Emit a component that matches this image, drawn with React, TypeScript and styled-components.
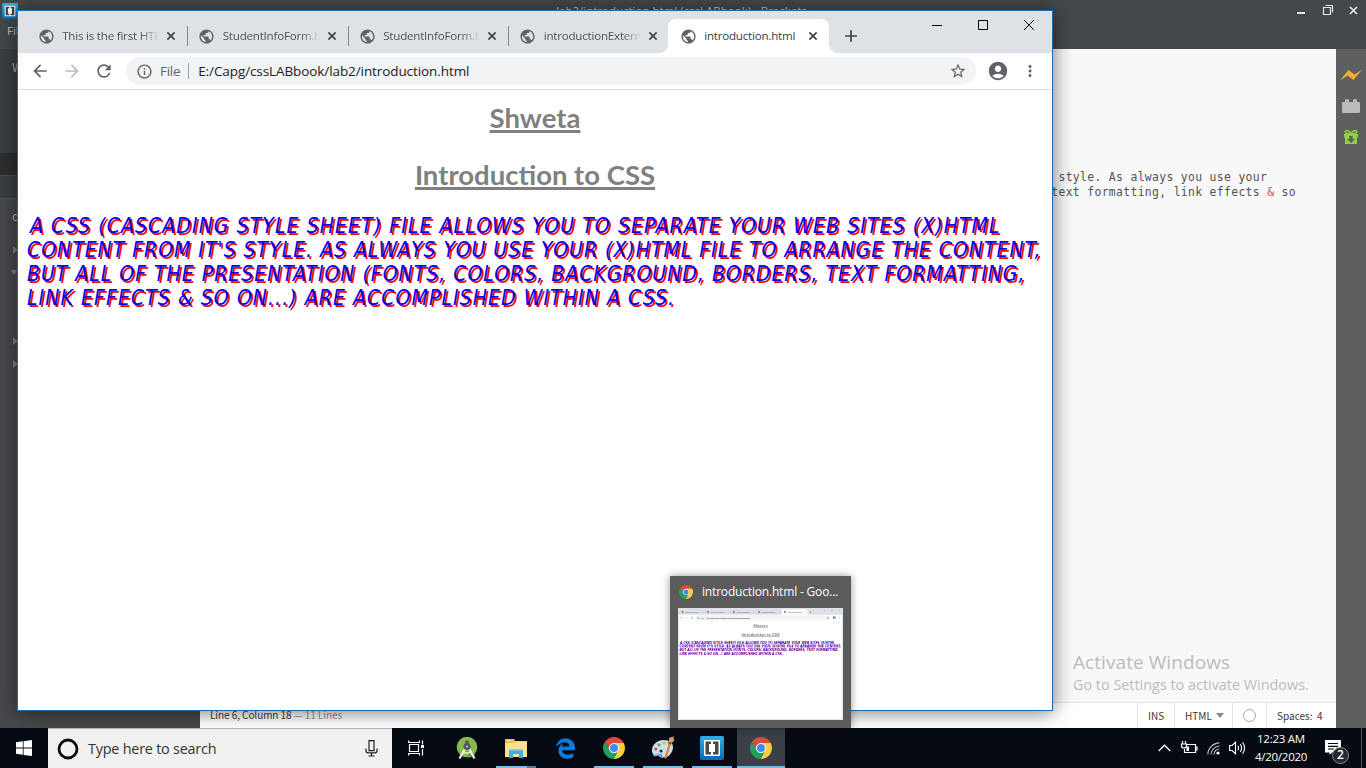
import React from "react";
import styled, { createGlobalStyle, css } from "styled-components";
import {
  MdAccountCircle,
  MdAdd,
  MdArrowBack,
  MdArrowForward,
  MdInfoOutline,
  MdMoreVert,
  MdPublic,
  MdRefresh,
  MdStarBorder,
} from "react-icons/md";
import { FaEdgeLegacy } from "react-icons/fa";

const GlobalStyle = createGlobalStyle`
  *, *::before, *::after { box-sizing: border-box; }
  body { margin: 0; overflow: hidden; background: #060a12; }
  svg { display: block; flex: none; }
`;

const uiFont = `"Open Sans", "Noto Sans", sans-serif`;
const editorUiFont = `"Noto Sans CJK SC", "Noto Sans", sans-serif`;

const Desktop = styled.div`
  position: relative;
  display: grid;
  grid-template-rows: 728px 40px;
  width: 1366px;
  height: 768px;
  overflow: hidden;
  font-family: ${uiFont};
  white-space: nowrap;
`;

/* ---------- Code editor ---------- */

const EditorApp = styled.div`
  display: grid;
  grid-template-rows: 22px 27px 1fr;
  min-height: 0;
  background: #45484a;
`;

const EditorTitleBar = styled.header`
  display: grid;
  grid-template-columns: 1fr auto 1fr;
  align-items: center;
  padding: 0 7px 0 2px;
  color: #c8caca;
`;

const EditorTitle = styled.span`
  padding-left: 2px;
  font-size: 11.5px;
  line-height: 20px;
`;

const EditorWindowButtons = styled.div`
  display: flex;
  justify-content: flex-end;
`;

const EditorMenu = styled.nav`
  padding: 0 7px;
  font-size: 11.5px;
  line-height: 17px;
  color: #c3c5c5;
`;

const EditorBody = styled.div`
  display: grid;
  grid-template-columns: 200px 1fr 30px;
  min-height: 0;
`;

const Sidebar = styled.aside`
  display: flex;
  flex-direction: column;
  background: #47484b;
  color: #b5b8b8;
  font: 12px/20px ${editorUiFont};
`;

const WorkingFiles = styled.div`
  height: 104px;
  padding: 8px 12px;
  background: #3c3f41;
`;

const SelectedFile = styled.div`
  height: 22px;
  background: #2d2e30;
`;

const OtherFile = styled.div`
  height: 24px;
  background: #3c3f41;
  border-top: 1px solid #4b4d4f;
  border-bottom: 1px solid #55575a;
`;

const ProjectName = styled.div`
  height: 39px;
  padding: 7px 12px 0;
`;

const TreeRow = styled.div<{ $open?: boolean; $gap?: number }>`
  display: flex;
  align-items: center;
  height: 23px;
  margin-bottom: ${(p) => p.$gap ?? 0}px;
  padding-left: ${(p) => (p.$open ? 11 : 13)}px;
`;

const CodePane = styled.main`
  display: flex;
  flex-direction: column;
  background: #f8f8f8;
`;

const CodeText = styled.pre`
  flex: 1;
  margin: 0;
  padding: 121px 40px 0 0;
  text-align: right;
  font: 11.4px/15px "DejaVu Sans Mono", "Liberation Mono", monospace;
  letter-spacing: 0.34px;
  color: #535353;
`;

const CodeLine = styled.div<{ $inset?: number }>`
  padding-right: ${(p) => p.$inset ?? 0}px;
`;

const EntityError = styled.span`
  color: #e6413f;
`;

const Watermark = styled.div`
  align-self: flex-end;
  width: 263px;
  height: 52px;
  color: #bcbcbc;
`;

const WatermarkTitle = styled.div`
  font-size: 19px;
  line-height: 24px;
  letter-spacing: 0.07px;
`;

const WatermarkText = styled.div`
  font-size: 14.4px;
  line-height: 22px;
`;

const StatusBar = styled.footer`
  display: flex;
  height: 26px;
  border-top: 1px solid #e2e2e2;
  background: #fff;
  color: #3b3b3b;
  font: 10px/24px ${editorUiFont};
`;

const CursorInfo = styled.div`
  flex: 1;
  padding-left: 10px;
  letter-spacing: -0.07px;
`;

const LineCount = styled.span`
  color: #949494;
`;

const StatusCell = styled.div<{ $width: number }>`
  display: flex;
  align-items: center;
  justify-content: space-between;
  width: ${(p) => p.$width}px;
  padding: 0 8px 0 10px;
  border-left: 1px solid #e2e2e2;
  white-space: pre;
`;

const LintDot = styled.span`
  width: 13px;
  height: 13px;
  border: 1px solid #a6a6a6;
  border-radius: 50%;
`;

const ExtensionBar = styled.aside`
  display: flex;
  flex-direction: column;
  align-items: center;
  gap: 9px;
  padding-top: 15px;
  background: #5d5f60;
`;

/* ---------- Browser ---------- */

const BrowserPlace = styled.div`
  position: absolute;
  left: 17px;
  top: 10px;
  box-shadow: 0 1px 18px rgba(0, 0, 0, 0.55);
`;

const BrowserFrame = styled.div`
  display: grid;
  grid-template-rows: 42px 37px 1fr;
  width: 1036px;
  height: 701px;
  border: 1px solid #186fb6;
  background: #fff;
`;

const TabStrip = styled.div`
  display: flex;
  align-items: flex-end;
  padding-left: 8px;
  background: #dee1e6;
`;

const activeTab = css`
  background: #fff;
  border-radius: 8px 8px 0 0;
  &::before,
  &::after {
    content: "";
    position: absolute;
    bottom: 0;
    width: 8px;
    height: 8px;
  }
  &::before {
    left: -8px;
    background: radial-gradient(circle at 0 0, transparent 7.5px, #fff 8px);
  }
  &::after {
    right: -8px;
    background: radial-gradient(circle at 100% 0, transparent 7.5px, #fff 8px);
  }
`;

const Tab = styled.div<{ $active?: boolean; $divided?: boolean }>`
  position: relative;
  display: flex;
  align-items: center;
  width: 160.5px;
  height: 34px;
  padding: 0 11.2px 0 11.5px;
  color: ${(p) => (p.$active ? "#3c4043" : "#505357")};
  ${(p) => p.$active && activeTab}
  ${(p) =>
    p.$divided &&
    "background: linear-gradient(#84878c, #84878c) no-repeat 0.5px 7px / 1px 20px;"}
`;

const TabTitle = styled.span<{ $faded?: boolean }>`
  flex: 1;
  min-width: 0;
  margin: 0 8px 0 7.7px;
  overflow: hidden;
  font-size: 11.6px;
  line-height: 20px;
  letter-spacing: -0.22px;
  ${(p) => p.$faded && "mask-image: linear-gradient(to right, #000 80%, transparent 100%);"}
`;

const NewTab = styled.div`
  display: flex;
  align-items: center;
  height: 34px;
  padding-left: 12px;
  color: #3c4043;
`;

const WindowButtons = styled.div`
  display: flex;
  align-self: flex-start;
  gap: 36px;
  margin-left: auto;
  padding: 9px 18px 0 0;
`;

const NavBar = styled.div`
  display: flex;
  align-items: center;
  padding-left: 12px;
  border-bottom: 1px solid #dadce0;
  color: #5f6368;
`;

const NavButton = styled.span<{ $off?: boolean }>`
  display: flex;
  width: 32px;
  opacity: ${(p) => (p.$off ? 0.42 : 1)};
`;

const AddressBox = styled.div`
  display: flex;
  align-items: center;
  width: 850px;
  height: 28px;
  margin-right: 11px;
  padding: 0 9px 0 9.5px;
  border-radius: 14px;
  background: #f1f3f4;
  font-size: 13.5px;
`;

const Scheme = styled.span`
  margin-left: 7.5px;
  padding-right: 8px;
  border-right: 1px solid #9aa0a6;
  line-height: 16px;
  letter-spacing: -0.3px;
`;

const Url = styled.span`
  flex: 1;
  padding-left: 9px;
  color: #202124;
  letter-spacing: -0.09px;
`;

const Avatar = styled.span`
  display: flex;
  margin-right: 12px;
`;

const Page = styled.article`
  padding: 8px 9px;
`;

const Heading = styled.h1`
  margin: 0 0 18px;
  text-align: center;
  font: 700 27.5px/39px Lato, Carlito, sans-serif;
  color: #808080;
  text-decoration: underline 3px;
  text-underline-offset: 2px;
  text-decoration-skip-ink: none;
`;

const Intro = styled.p`
  margin: 20px 0 0;
  font: italic 21px/24px "DejaVu Sans Condensed", "DejaVu Sans", sans-serif;
  color: #00f;
  text-shadow: 2px 2px #f00;
`;

const IntroLine = styled.span<{ $spacing: number }>`
  display: block;
  letter-spacing: ${(p) => p.$spacing}px;
  &:first-child {
    padding-left: 3px;
  }
`;

/* ---------- Taskbar preview ---------- */

const Preview = styled.div`
  position: absolute;
  left: 670px;
  top: 576px;
  width: 181px;
  height: 152px;
  padding: 0 8px;
  background: #5b5b5b;
  box-shadow: 0 0 8px rgba(0, 0, 0, 0.4);
`;

const PreviewTitle = styled.div`
  display: flex;
  align-items: center;
  gap: 9px;
  height: 31px;
  margin-bottom: 1px;
  padding-left: 1px;
  color: #fff;
  font-size: 12px;
  letter-spacing: -0.18px;
`;

const PreviewShot = styled.div`
  width: 165px;
  height: 112px;
  overflow: hidden;
  background: #fff;
`;

const Shrink = styled.div`
  width: 1036px;
  transform: scale(0.1593);
  transform-origin: 0 0;
`;

/* ---------- Taskbar ---------- */

const Taskbar = styled.footer`
  display: flex;
  background: #060a12;
  color: #fff;
`;

const StartButton = styled.div`
  display: grid;
  place-items: center;
  width: 48px;
`;

const SearchBox = styled.div`
  display: flex;
  align-items: center;
  width: 344px;
  padding: 0 14px 0 9px;
  border-top: 1px solid #b4b4b4;
  background: #f1f1f1;
  color: #333;
`;

const SearchHint = styled.span`
  flex: 1;
  padding-left: 9px;
  font-size: 14.4px;
  letter-spacing: -0.22px;
`;

const AppButtons = styled.div`
  display: flex;
  gap: 1px;
`;

const AppButton = styled.div<{ $state?: "running" | "multiple" | "active"; $spaced?: boolean }>`
  display: grid;
  place-items: center;
  width: 48px;
  margin-right: ${(p) => (p.$spaced ? 2 : 0)}px;
  ${(p) => p.$state === "active" && "background: linear-gradient(#76b9ed, #76b9ed) no-repeat center bottom / 48px 2px, #3b4048;"}
  ${(p) => p.$state === "running" && "background: linear-gradient(#76b9ed, #76b9ed) no-repeat center bottom / 40px 2px;"}
  ${(p) =>
    p.$state === "multiple" &&
    "background: linear-gradient(90deg, #76b9ed 31px, #4f7ea5 31px) no-repeat center bottom / 40px 2px;"}
`;

const Tray = styled.div`
  display: flex;
  align-items: center;
  margin-left: auto;
`;

const TrayIcons = styled.div`
  display: flex;
  align-items: center;
  gap: 9px;
`;

const Clock = styled.div`
  width: 56px;
  margin-left: 7px;
  text-align: center;
  font-size: 11.5px;
  line-height: 18px;
  letter-spacing: -0.25px;
`;

const Notifications = styled.div`
  position: relative;
  margin-left: 16px;
`;

const Badge = styled.span`
  position: absolute;
  left: 7px;
  top: 7px;
  width: 17px;
  height: 17px;
  border: 1px solid #8b8d90;
  border-radius: 50%;
  background: #25282d;
  text-align: center;
  font-size: 12px;
  font-weight: 600;
  line-height: 14px;
`;

const ShowDesktop = styled.div`
  align-self: stretch;
  width: 5px;
  margin-left: 20px;
  border-left: 1px solid #4d5055;
`;

/* ---------- Drawings ---------- */

const ChromeLogo = ({ size }: { size: number }) => (
  <svg width={size} height={size} viewBox="0 0 48 48">
    <circle cx="24" cy="24" r="13" fill="#fff" />
    <path fill="#dd4b3e" d="M14.47 29.5 3.82 11.05A24 24 0 0 1 45.3 13H24a11 11 0 0 0-9.53 16.5Z" />
    <path fill="#ffcd40" d="M24 13h21.3a24 24 0 0 1-22.42 34.95L33.53 29.5A11 11 0 0 0 24 13Z" />
    <path fill="#1da15f" d="M33.53 29.5 22.88 47.95A24 24 0 0 1 3.82 11.05L14.47 29.5a11 11 0 0 0 19.06 0Z" />
    <circle cx="24" cy="24" r="8.8" fill="#4688f1" />
  </svg>
);

const BracketsLogo = ({ size }: { size: number }) => (
  <svg width={size} height={size} viewBox="0 0 24 24">
    <defs>
      <linearGradient id="bracketsBlue" x1="0" y1="0" x2="0" y2="1">
        <stop offset="0" stopColor="#2cb0e8" />
        <stop offset="1" stopColor="#0b6cb4" />
      </linearGradient>
    </defs>
    <rect width="24" height="24" rx="2" fill="url(#bracketsBlue)" />
    <rect x="4" y="4" width="16" height="16" rx="1" fill="#fff" />
    <path fill="#484848" d="M5.500 5.500h5.500v2.500H9v8h2v2.500H5.500ZM18.500 5.500H13v2.500h2v8h-2v2.500h5.500Z" />
  </svg>
);

const AndroidStudioLogo = () => (
  <svg width="22" height="24" viewBox="0 0 22 24">
    <circle cx="11" cy="11" r="10.3" fill="#84bb4a" />
    <path fill="#6c9f3b" d="m13 14 6 5a10.300 10.300 0 0 1-8 2.300Z" />
    <path fill="none" stroke="#e9eeea" strokeWidth="2.200" d="M10 11 3.500 22.500M12 11l6.500 11.500" />
    <path fill="none" stroke="#e9eeea" strokeWidth="1.400" d="M6 15q5 4.500 10 0" />
    <rect x="9.300" y="4.500" width="3.400" height="5" rx="1" fill="#50585c" />
    <circle cx="11" cy="10.500" r="3.500" fill="#50585c" />
    <circle cx="11" cy="10.500" r="1.100" fill="#a5c88a" />
  </svg>
);

const FolderLogo = () => (
  <svg width="22" height="19" viewBox="0 0 22 19">
    <path fill="#f2bf3f" d="M0 0h9l1 2h12v16H0Z" />
    <path fill="#ffe291" d="M0 4h9l1.500-1.500H22V18H0Z" />
    <path fill="#3dacde" d="M4 10.500h14V19h-4v-4H8v4H4Z" />
    <path fill="#7dcbe9" d="M4 10.500h14v1.300H4Z" />
    <rect x="2" y="1" width="3.500" height="1" fill="#fff3cf" />
  </svg>
);

const PaintLogo = () => (
  <svg width="24" height="24" viewBox="0 0 24 24">
    <path fill="#c9dff0" d="M1 14.500C1 8.500 6.500 4 12.500 4S22 7 22 11c0 5.500-4.500 10.500-9 10.500-3.500 0-1-3.500-4-3.500-2.500 0-3 1.800-5 1.500-2-.200-3-2.500-3-5Z" />
    <path fill="#8fb5d6" d="M2 17.500c1 1.200 2.800.8 4 .2 2-1 4-.5 4.200 1.600.1 1.200 1 1.800 2.800 1.500-1 1.500-4.500 1-5-.8-.5-1.500-2.500.6-4.500.2-.9-.2-1.500-1.300-1.500-2.700Z" />
    <circle cx="4.800" cy="13" r="1.600" fill="#d9483b" />
    <circle cx="8" cy="8.800" r="1.600" fill="#5db640" />
    <circle cx="13" cy="7" r="1.600" fill="#e8b330" />
    <circle cx="18.500" cy="9" r="1.300" fill="#5aa045" />
    <circle cx="10" cy="15" r="1.500" fill="#1e2936" />
    <path stroke="#e2822d" strokeWidth="2.200" strokeLinecap="round" d="m14.500 21.500 4.500-14" />
    <path fill="#cfa274" d="m17.500 6 1-4.500L23 .5l-.5 2 1 1.500-3 3.500Z" />
    <path fill="#7d4b28" d="m17.300 5.500 3.500 1.300-.6 1.700-3.400-1.200Z" />
  </svg>
);

const CloseMark = () => (
  <svg width="8" height="8" viewBox="0 0 8 8">
    <path stroke="#3c4043" strokeWidth="1.600" d="m.4.4 7.200 7.200M7.600.4.4 7.600" />
  </svg>
);

const Caret = ({ open }: { open?: boolean }) =>
  open ? (
    <svg width="6" height="5">
      <path fill="#7d8484" d="M0 0h6L3 5Z" />
    </svg>
  ) : (
    <svg width="5" height="8">
      <path fill="#7d8484" d="M0 0l5 4-5 4Z" />
    </svg>
  );

/* ---------- Assembled parts ---------- */

const tabs = [
  "This is the first HTML page",
  "StudentInfoForm.html",
  "StudentInfoForm.html",
  "introductionExternal.html",
  "introduction.html",
];

const introLines = [
  { text: "A CSS (CASCADING STYLE SHEET) FILE ALLOWS YOU TO SEPARATE YOUR WEB SITES (X)HTML", spacing: 1.084 },
  { text: "CONTENT FROM IT'S STYLE. AS ALWAYS YOU USE YOUR (X)HTML FILE TO ARRANGE THE CONTENT,", spacing: 0.99 },
  { text: "BUT ALL OF THE PRESENTATION (FONTS, COLORS, BACKGROUND, BORDERS, TEXT FORMATTING,", spacing: 1.005 },
  { text: "LINK EFFECTS & SO ON...) ARE ACCOMPLISHED WITHIN A CSS.", spacing: 1.075 },
];

const Browser = () => (
  <BrowserFrame>
    <TabStrip>
      {tabs.map((title, i) => (
        <Tab key={i} $active={i === 4} $divided={i > 0 && i < 4}>
          <MdPublic size={17} color="#5f6368" />
          <TabTitle $faded={i < 4}>{title}</TabTitle>
          <CloseMark />
        </Tab>
      ))}
      <NewTab>
        <MdAdd size={20} />
      </NewTab>
      <WindowButtons>
        <svg width="10" height="11">
          <path stroke="#000" d="M0 5.500h10" />
        </svg>
        <svg width="10" height="10">
          <path fill="none" stroke="#000" d="M.5.5h9v9h-9Z" />
        </svg>
        <svg width="10" height="10">
          <path stroke="#000" d="m0 0 10 10M10 0 0 10" />
        </svg>
      </WindowButtons>
    </TabStrip>
    <NavBar>
      <NavButton>
        <MdArrowBack size={20} />
      </NavButton>
      <NavButton $off>
        <MdArrowForward size={20} />
      </NavButton>
      <NavButton>
        <MdRefresh size={20} />
      </NavButton>
      <AddressBox>
        <MdInfoOutline size={17} />
        <Scheme>File</Scheme>
        <Url>E:/Capg/cssLABbook/lab2/introduction.html</Url>
        <MdStarBorder size={18} />
      </AddressBox>
      <Avatar>
        <MdAccountCircle size={22} />
      </Avatar>
      <MdMoreVert size={18} />
    </NavBar>
    <Page>
      <Heading>Shweta</Heading>
      <Heading>Introduction to CSS</Heading>
      <Intro>
        {introLines.map((line) => (
          <IntroLine key={line.text} $spacing={line.spacing}>
            {line.text}
          </IntroLine>
        ))}
      </Intro>
    </Page>
  </BrowserFrame>
);

const Editor = () => (
  <EditorApp>
    <EditorTitleBar>
      <BracketsLogo size={16} />
      <EditorTitle>lab2/introduction.html (cssLABbook) - Brackets</EditorTitle>
      <EditorWindowButtons>
        <svg width="64" height="14" viewBox="0 0 64 14" fill="none" stroke="#e4e4e4">
          <path strokeWidth="2" d="M2 9h8" />
          <path strokeWidth="1.200" d="M28.500 3.500h7v7h-7Zm2-2h7v7" />
          <path strokeWidth="1.700" d="m55 3 7 7m0-7-7 7" />
        </svg>
      </EditorWindowButtons>
    </EditorTitleBar>
    <EditorMenu>File</EditorMenu>
    <EditorBody>
      <Sidebar>
        <WorkingFiles>Working Files</WorkingFiles>
        <SelectedFile />
        <OtherFile />
        <ProjectName>cssLABbook</ProjectName>
        <TreeRow>
          <Caret />
        </TreeRow>
        <TreeRow $open $gap={45}>
          <Caret open />
        </TreeRow>
        <TreeRow>
          <Caret />
        </TreeRow>
        <TreeRow>
          <Caret />
        </TreeRow>
      </Sidebar>
      <CodePane>
        <CodeText>
          <CodeLine $inset={28.8}>style. As always you use your</CodeLine>
          <CodeLine>
            text formatting, link effects <EntityError>&amp;</EntityError> so
          </CodeLine>
        </CodeText>
        <Watermark>
          <WatermarkTitle>Activate Windows</WatermarkTitle>
          <WatermarkText>Go to Settings to activate Windows.</WatermarkText>
        </Watermark>
        <StatusBar>
          <CursorInfo>
            Line 6, Column 18 <LineCount>— 11 Lines</LineCount>
          </CursorInfo>
          <StatusCell $width={37}>INS</StatusCell>
          <StatusCell $width={58}>
            HTML
            <svg width="8" height="5">
              <path fill="#8a8a8a" d="M0 0h8L4 5Z" />
            </svg>
          </StatusCell>
          <StatusCell $width={34}>
            <LintDot />
          </StatusCell>
          <StatusCell $width={70}>{"Spaces:  4"}</StatusCell>
        </StatusBar>
      </CodePane>
      <ExtensionBar>
        <svg width="22" height="22" viewBox="0 0 22 22">
          <path fill="#fbaa32" d="M0 16.500 8.500 6l6 4.500L22 5.500 13.500 16l-6-4.500Z" />
        </svg>
        <svg width="18" height="22" viewBox="0 0 18 22">
          <path fill="#bababa" d="M0 8q0-1 1-1h2V5.500Q3 4 5 4t2 1.500V7h4V5.500Q11 4 13 4t2 1.500V7h2q1 0 1 1v9q0 1-1 1H1q-1 0-1-1Z" />
        </svg>
        <svg width="14" height="22" viewBox="0 0 14 22">
          <path fill="#91cf40" d="M0 8h14v3.500h-1V18H1v-6.500H0Z" />
          <path fill="none" stroke="#91cf40" strokeWidth="1.500" d="M7 8C2 8 .5 6.500 1.500 5.200 3 3.500 6 5.500 7 8c1-2.500 4-4.500 5.500-2.800C13.500 6.500 12 8 7 8Z" />
          <path fill="#5d5f60" d="M5.300 10h3.400v3H11l-4 4-4-4h2.300Z" />
        </svg>
      </ExtensionBar>
    </EditorBody>
  </EditorApp>
);

const SystemTaskbar = () => (
  <Taskbar>
    <StartButton>
      <svg width="16" height="16" viewBox="0 0 16 16">
        <path fill="#fff" d="M0 2.200 6.800 1.300V7.600H0ZM7.600 1.200 16 0V7.600H7.600ZM0 8.400H6.800V14.800L0 13.800ZM7.600 8.400H16V16L7.600 14.900Z" />
      </svg>
    </StartButton>
    <SearchBox>
      <svg width="22" height="22">
        <circle cx="11" cy="11" r="9" fill="none" stroke="#0c0c0c" strokeWidth="2.800" />
      </svg>
      <SearchHint>Type here to search</SearchHint>
      <svg width="13" height="17" viewBox="0 0 13 17" fill="none" stroke="#222">
        <path strokeWidth="1.200" d="M4 .7h5v10H4ZM1 8.500v2.300q0 2 2 2h7q2 0 2-2V8.500M6.500 13v3M3.500 16h6" />
      </svg>
    </SearchBox>
    <AppButtons>
      <AppButton $spaced>
        <svg width="17" height="16" viewBox="0 0 17 16" fill="none" stroke="#fff">
          <path strokeWidth="1.200" d="M1.500 4.500h9v7h-9ZM.7.500V2.500H11.500V.5M.7 15.500v-2h10.800v2M14.500.500v4M14.500 9v6.500" />
          <path fill="#fff" stroke="none" d="M13 5h3v3h-3Z" />
        </svg>
      </AppButton>
      <AppButton>
        <AndroidStudioLogo />
      </AppButton>
      <AppButton $state="multiple">
        <FolderLogo />
      </AppButton>
      <AppButton>
        <FaEdgeLegacy size={21} color="#0a7bd8" />
      </AppButton>
      <AppButton $state="running">
        <ChromeLogo size={22} />
      </AppButton>
      <AppButton $state="running">
        <PaintLogo />
      </AppButton>
      <AppButton $state="running">
        <BracketsLogo size={24} />
      </AppButton>
      <AppButton $state="active">
        <ChromeLogo size={22} />
      </AppButton>
    </AppButtons>
    <Tray>
      <TrayIcons>
        <svg width="13" height="8" viewBox="0 0 13 8">
          <path fill="none" stroke="#fff" strokeWidth="1.300" d="m.7 7 5.800-5.800L12.300 7" />
        </svg>
        <svg width="18" height="14" viewBox="0 0 18 14">
          <path fill="none" stroke="#fff" strokeWidth="1.200" d="M7 3.500h8.500v8H4.500V8M16 6h1v3h-1M2.500 0v3M5.500 0v3M1.500 3h5v2q0 2-2.500 2t-2.500-2Z" />
          <path fill="#fff" d="M6.500 5.500H9V10H6.500Z" />
        </svg>
        <svg width="13" height="13" viewBox="0 0 13 13" fill="none" stroke="#b9bcc0" strokeWidth="1.200">
          <path d="M.8 12.500A12 12 0 0 1 12.500.8M4 12.500A8.800 8.800 0 0 1 12.500 4M7 12.500A5.500 5.500 0 0 1 12.500 7" />
          <circle cx="11" cy="11" r="1.600" fill="#fff" stroke="none" />
        </svg>
        <svg width="17" height="14" viewBox="0 0 17 14" fill="none" stroke="#fff" strokeWidth="1.100">
          <path d="M.6 4.500h2.500L6.500 1.300v11.400L3.100 9.500H.6ZM8.800 4.800q1.500 2.200 0 4.400M11.200 3q2.800 4 0 8M13.600 1.300q4 5.700 0 11.400" />
        </svg>
      </TrayIcons>
      <Clock>
        12:23 AM
        <br />
        4/20/2020
      </Clock>
      <Notifications>
        <svg width="16" height="16" viewBox="0 0 16 16">
          <path fill="#fff" d="M0 0h16v12.500H7L4.500 15v-2.500H0Z" />
          <path stroke="#060a12" strokeWidth="1.200" d="M3 3.500h10M3 6.300h10M3 9h6" />
        </svg>
        <Badge>2</Badge>
      </Notifications>
      <ShowDesktop />
    </Tray>
  </Taskbar>
);

export default function App() {
  return (
    <Desktop>
      <GlobalStyle />
      <Editor />
      <SystemTaskbar />
      <BrowserPlace>
        <Browser />
      </BrowserPlace>
      <Preview>
        <PreviewTitle>
          <ChromeLogo size={14} />
          introduction.html - Goo...
        </PreviewTitle>
        <PreviewShot>
          <Shrink>
            <Browser />
          </Shrink>
        </PreviewShot>
      </Preview>
    </Desktop>
  );
}
